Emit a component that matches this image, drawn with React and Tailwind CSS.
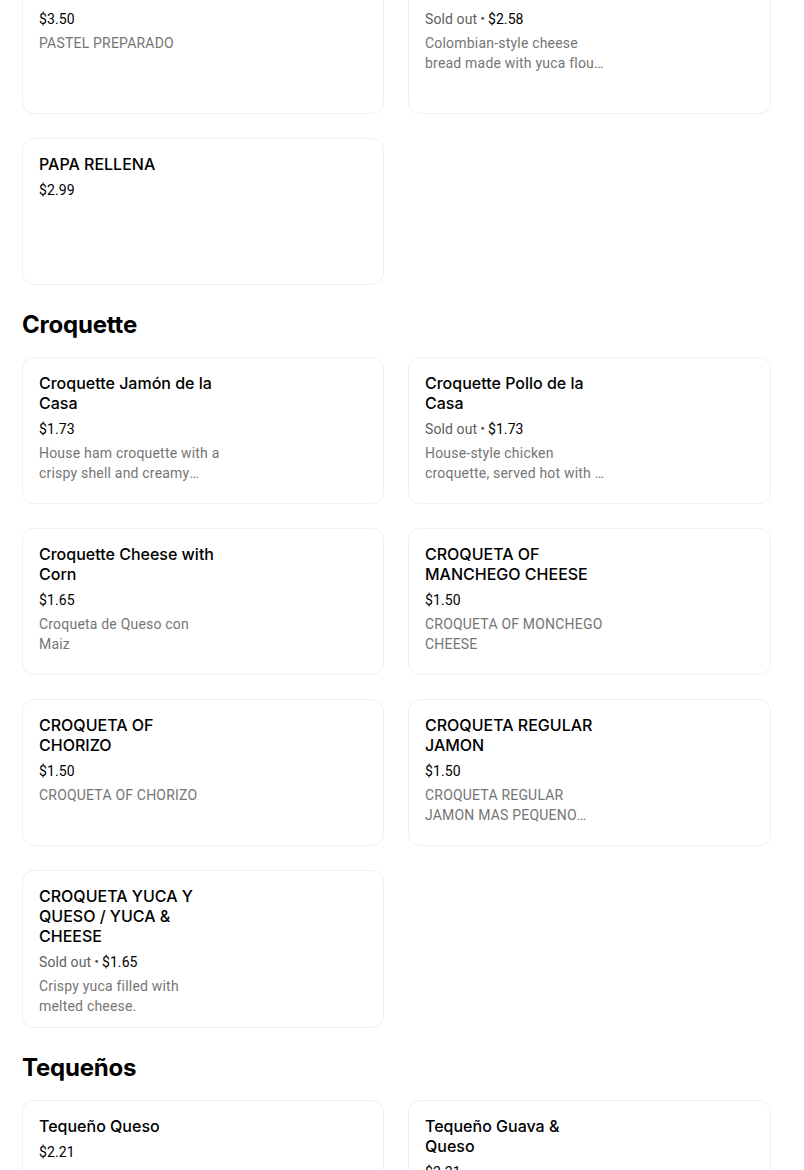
const sections = [
  {
    title: null,
    items: [
      { name: 'PASTEL PREPARADO', price: '$3.50', desc: 'PASTEL PREPARADO' },
      {
        name: 'Pan de Bono',
        price: '$2.58',
        soldOut: true,
        desc: 'Colombian-style cheese bread made with yuca flour and baked fresh daily.',
      },
      { name: 'PAPA RELLENA', price: '$2.99' },
    ],
  },
  {
    title: 'Croquette',
    items: [
      {
        name: 'Croquette Jamón de la Casa',
        price: '$1.73',
        desc: 'House ham croquette with a crispy shell and creamy bechamel filling.',
      },
      {
        name: 'Croquette Pollo de la Casa',
        price: '$1.73',
        soldOut: true,
        desc: 'House-style chicken croquette, served hot with a golden crust.',
      },
      { name: 'Croquette Cheese with Corn', price: '$1.65', desc: 'Croqueta de Queso con Maiz' },
      { name: 'CROQUETA OF MANCHEGO CHEESE', price: '$1.50', desc: 'CROQUETA OF MONCHEGO CHEESE' },
      { name: 'CROQUETA OF CHORIZO', price: '$1.50', desc: 'CROQUETA OF CHORIZO' },
      {
        name: 'CROQUETA REGULAR JAMON',
        price: '$1.50',
        desc: 'CROQUETA REGULAR JAMON MAS PEQUENO QUE LA DE LA CASA',
      },
      {
        name: 'CROQUETA YUCA Y QUESO / YUCA & CHEESE',
        price: '$1.65',
        soldOut: true,
        desc: 'Crispy yuca filled with melted cheese.',
      },
    ],
  },
  {
    title: 'Tequeños',
    items: [
      { name: 'Tequeño Queso', price: '$2.21', desc: 'Pastry filled with melted white cheese.' },
      { name: 'Tequeño Guava & Queso', price: '$2.21', desc: 'Pastry filled with guava and cheese.' },
    ],
  },
];

function ItemCard({ item }) {
  return (
    <div className="min-h-[147px] rounded-xl border border-[#f0f0f0] bg-white pl-[16px] pr-4 pt-[15px] pb-[11px]">
      <div className="w-[182px]">
        <div className="font-['Inter',sans-serif] text-[16px] font-medium leading-5 text-black">
          {item.name}
        </div>
        <div className="mt-[6px] font-['Roboto',sans-serif] text-[14px] leading-5 tracking-[0.1px] text-black">
          {item.soldOut && <span className="text-[#5e5e5e]">Sold out{'\u2009'}•{'\u2009'}</span>}
          {item.price}
        </div>
        {item.desc && (
          <div className="mt-1 line-clamp-2 font-['Roboto',sans-serif] text-[14px] leading-5 tracking-[0.2px] text-[#757575]">
            {item.desc}
          </div>
        )}
      </div>
    </div>
  );
}

export default function App() {
  return (
    <div
      className="h-[1170px] w-[804px] overflow-hidden bg-white"
      style={{ fontFamily: 'Inter, "Noto Sans", sans-serif' }}
    >
      <div className="ml-[22px] mt-[-33px] w-[749px]">
        {sections.map((section, i) => (
          <div key={i} className={i > 0 ? 'mt-6' : ''}>
            {section.title && (
              <h2 className="mb-[16px] text-[24px] font-bold leading-8 tracking-[-0.2px] text-black">
                {section.title}
              </h2>
            )}
            <div className="grid grid-cols-[362px_363px] gap-6">
              {section.items.map((item) => (
                <ItemCard key={item.name} item={item} />
              ))}
            </div>
          </div>
        ))}
      </div>
    </div>
  );
}
